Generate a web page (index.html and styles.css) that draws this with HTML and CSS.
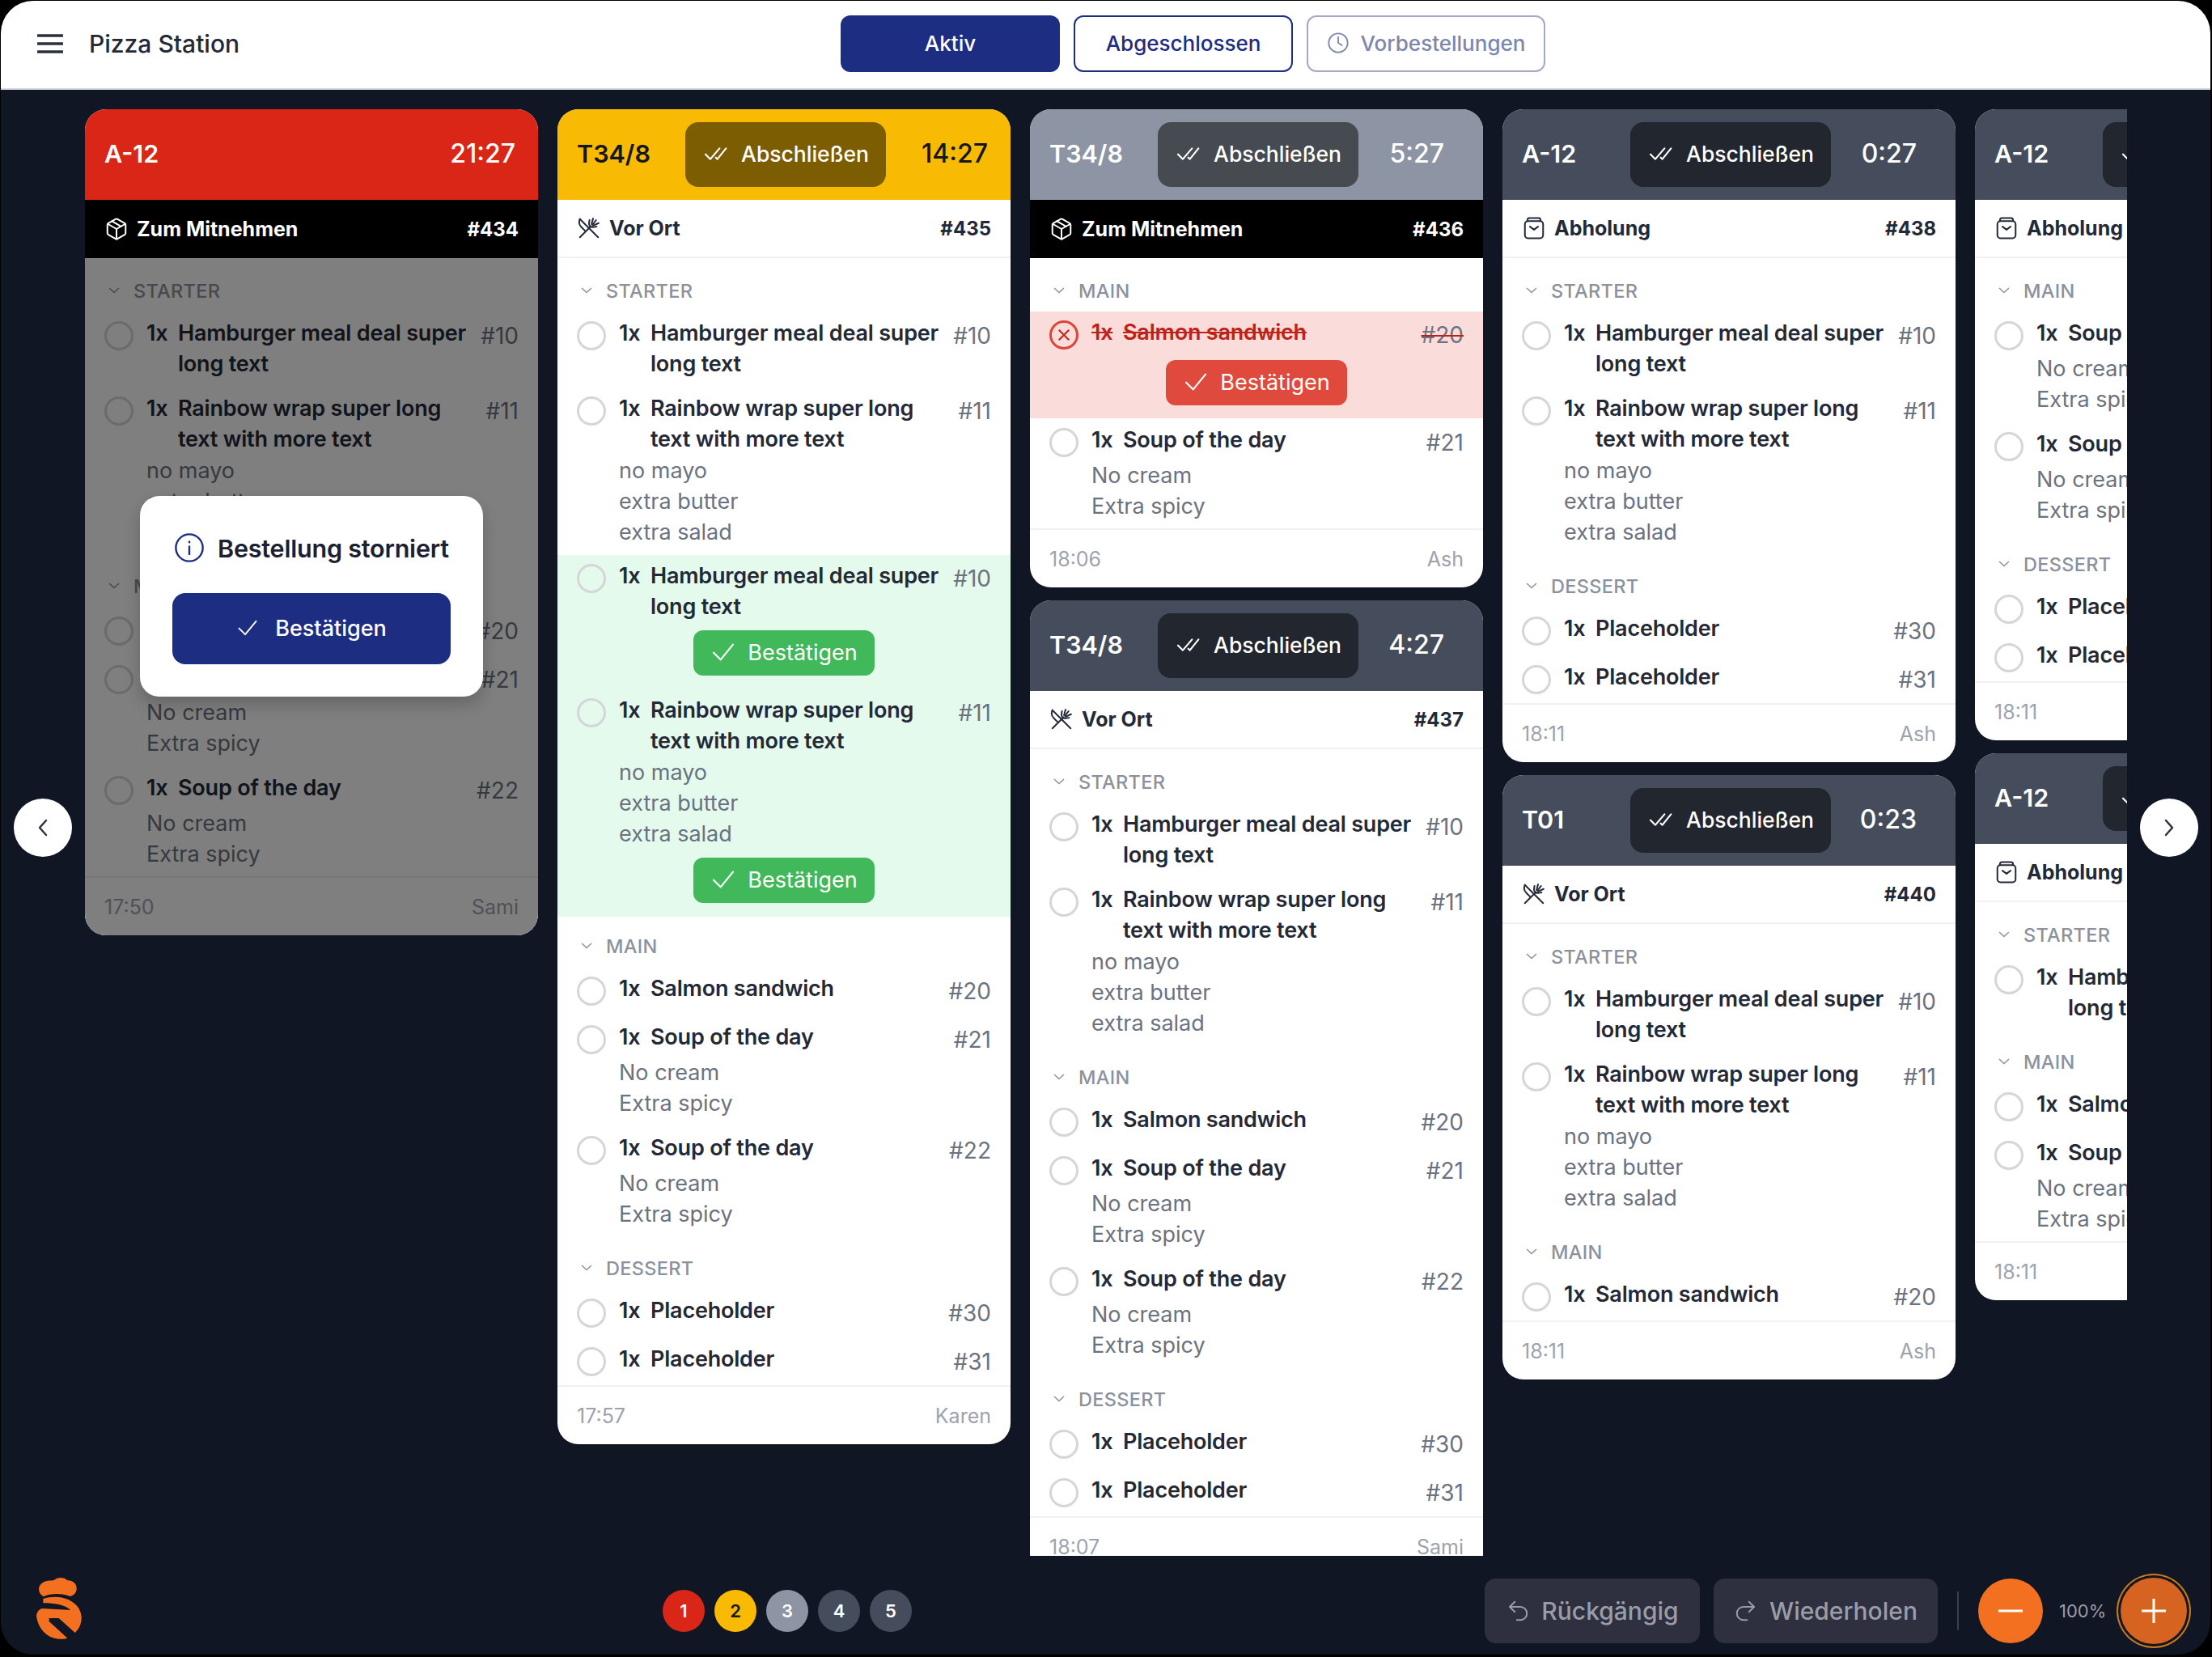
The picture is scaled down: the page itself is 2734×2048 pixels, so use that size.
FILE: index.html
```html
<!DOCTYPE html>
<html lang="de">
<head>
<meta charset="utf-8">
<title>Pizza Station</title>
<link rel="stylesheet" href="styles.css">
</head>
<body>
<svg class="sprite" aria-hidden="true">
  <symbol id="i-checks" viewBox="0 0 24 24"><path d="M16 7 7.5 17 3 12.5"/><path d="m22 7-8 10-1.5-1.5"/></symbol>
  <symbol id="i-check" viewBox="0 0 24 24"><path d="M21 5 9.5 19 3 12.5"/></symbol>
  <symbol id="i-box" viewBox="0 0 24 24"><path d="M21 8a2 2 0 0 0-1-1.73l-7-4a2 2 0 0 0-2 0l-7 4A2 2 0 0 0 3 8v8a2 2 0 0 0 1 1.73l7 4a2 2 0 0 0 2 0l7-4A2 2 0 0 0 21 16Z"/><path d="m3.3 7 8.7 5 8.7-5"/><path d="M12 22V12"/><path d="m7.5 4.27 9 5.15"/></symbol>
  <symbol id="i-utensils" viewBox="0 0 24 24"><path d="M3 3 21 21"/><path d="M3 3c-1.400 3 -.5 6 1.500 8l3.500 3.500"/><path d="M3 21 14 10"/><path d="m12.500 4-.5 3c-.2 1.500 .3 2.300 1 3 .7.700 1.500 1.200 3 1l3.500-.5"/><path d="M16 2.500 14.500 8"/><path d="m19 4-3.500 4.500"/><path d="M21.500 7 16 9.500"/></symbol>
  <symbol id="i-bag" viewBox="0 0 24 24"><rect x="3" y="5" width="18" height="17" rx="3"/><path d="M5.500 5V4a2 2 0 0 1 2-2h9a2 2 0 0 1 2 2v1"/><path d="m8 10.500 4 3 4-3"/></symbol>
  <symbol id="i-clock" viewBox="0 0 24 24"><circle cx="12" cy="12" r="10"/><path d="M12 6v6l4 2.500"/></symbol>
  <symbol id="i-info" viewBox="0 0 24 24"><circle cx="12" cy="12" r="10.500"/><path d="M12 11v6"/><path d="M12 7.200v.6"/></symbol>
  <symbol id="i-chev" viewBox="0 0 14 8"><path d="m1 1 6 5.500L13 1"/></symbol>
  <symbol id="i-undo" viewBox="0 0 24 24"><path d="M9 13 4 8l5-5"/><path d="M4 8h10.500a5.500 5.500 0 0 1 0 13H11"/></symbol>
  <symbol id="i-redo" viewBox="0 0 24 24"><path d="m15 13 5-5-5-5"/><path d="M20 8H9.500a5.500 5.500 0 0 0 0 13H13"/></symbol>
</svg>

<div class="app">
  <header class="topbar">
    <div class="brand">
      <svg class="burger" viewBox="0 0 32 26"><path d="M1 3h30M1 13h30M1 23h30"/></svg>
      <span class="brand-name">Pizza Station</span>
    </div>
    <nav class="tabs">
      <button class="tab tab-active">Aktiv</button>
      <button class="tab tab-outline">Abgeschlossen</button>
      <button class="tab tab-muted"><svg class="ico ico-tab"><use href="#i-clock"/></svg>Vorbestellungen</button>
    </nav>
  </header>

  <main class="board">
    <!-- column 1 -->
    <div class="col">
      <article class="card card-cancelled">
        <div class="card-head head-red">
          <span class="title">A-12</span><span class="time">21:27</span>
        </div>
        <div class="band band-black"><svg class="ico ico-band"><use href="#i-box"/></svg><span class="band-name">Zum Mitnehmen</span><span class="band-no">#434</span></div>
        <div class="dim-area">
          <div class="body">
            <section class="section">
              <div class="cat"><svg class="chev"><use href="#i-chev"/></svg>Starter</div>
              <div class="items">
                <div class="item"><span class="radio"></span><div class="main"><div class="line"><span class="qty">1x</span><span class="name">Hamburger meal deal super<br>long text</span><span class="ref">#10</span></div></div></div>
                <div class="item"><span class="radio"></span><div class="main"><div class="line"><span class="qty">1x</span><span class="name">Rainbow wrap super long<br>text with more text</span><span class="ref">#11</span></div><div class="notes">no mayo<br>extra butter<br>extra salad</div></div></div>
              </div>
            </section>
            <section class="section">
              <div class="cat"><svg class="chev"><use href="#i-chev"/></svg>Main</div>
              <div class="items">
                <div class="item"><span class="radio"></span><div class="main"><div class="line"><span class="qty">1x</span><span class="name">Salmon sandwich</span><span class="ref">#20</span></div></div></div>
                <div class="item"><span class="radio"></span><div class="main"><div class="line"><span class="qty">1x</span><span class="name">Soup of the day</span><span class="ref">#21</span></div><div class="notes">No cream<br>Extra spicy</div></div></div>
                <div class="item"><span class="radio"></span><div class="main"><div class="line"><span class="qty">1x</span><span class="name">Soup of the day</span><span class="ref">#22</span></div><div class="notes">No cream<br>Extra spicy</div></div></div>
              </div>
            </section>
          </div>
          <div class="foot"><span>17:50</span><span>Sami</span></div>
        </div>
        <div class="modal">
          <div class="modal-title"><svg class="ico ico-info"><use href="#i-info"/></svg>Bestellung storniert</div>
          <button class="modal-btn"><svg class="ico ico-modal"><use href="#i-check"/></svg>Bestätigen</button>
        </div>
      </article>
    </div>

    <!-- column 2 -->
    <div class="col">
      <article class="card">
        <div class="card-head head-yellow">
          <span class="title">T34/8</span>
          <button class="finish"><svg class="ico ico-finish"><use href="#i-checks"/></svg>Abschließen</button>
          <span class="time">14:27</span>
        </div>
        <div class="band"><svg class="ico ico-band"><use href="#i-utensils"/></svg><span class="band-name">Vor Ort</span><span class="band-no">#435</span></div>
        <div class="body">
          <section class="section">
            <div class="cat"><svg class="chev"><use href="#i-chev"/></svg>Starter</div>
            <div class="items">
              <div class="item"><span class="radio"></span><div class="main"><div class="line"><span class="qty">1x</span><span class="name">Hamburger meal deal super<br>long text</span><span class="ref">#10</span></div></div></div>
              <div class="item"><span class="radio"></span><div class="main"><div class="line"><span class="qty">1x</span><span class="name">Rainbow wrap super long<br>text with more text</span><span class="ref">#11</span></div><div class="notes">no mayo<br>extra butter<br>extra salad</div></div></div>
              <div class="hl hl-green">
                <div class="hl-entry">
                  <div class="item"><span class="radio"></span><div class="main"><div class="line"><span class="qty">1x</span><span class="name">Hamburger meal deal super<br>long text</span><span class="ref">#10</span></div></div></div>
                  <button class="confirm confirm-green"><svg class="ico ico-confirm"><use href="#i-check"/></svg>Bestätigen</button>
                </div>
                <div class="hl-entry">
                  <div class="item"><span class="radio"></span><div class="main"><div class="line"><span class="qty">1x</span><span class="name">Rainbow wrap super long<br>text with more text</span><span class="ref">#11</span></div><div class="notes">no mayo<br>extra butter<br>extra salad</div></div></div>
                  <button class="confirm confirm-green"><svg class="ico ico-confirm"><use href="#i-check"/></svg>Bestätigen</button>
                </div>
              </div>
            </div>
          </section>
          <section class="section">
            <div class="cat"><svg class="chev"><use href="#i-chev"/></svg>Main</div>
            <div class="items">
              <div class="item"><span class="radio"></span><div class="main"><div class="line"><span class="qty">1x</span><span class="name">Salmon sandwich</span><span class="ref">#20</span></div></div></div>
              <div class="item"><span class="radio"></span><div class="main"><div class="line"><span class="qty">1x</span><span class="name">Soup of the day</span><span class="ref">#21</span></div><div class="notes">No cream<br>Extra spicy</div></div></div>
              <div class="item"><span class="radio"></span><div class="main"><div class="line"><span class="qty">1x</span><span class="name">Soup of the day</span><span class="ref">#22</span></div><div class="notes">No cream<br>Extra spicy</div></div></div>
            </div>
          </section>
          <section class="section">
            <div class="cat"><svg class="chev"><use href="#i-chev"/></svg>Dessert</div>
            <div class="items">
              <div class="item"><span class="radio"></span><div class="main"><div class="line"><span class="qty">1x</span><span class="name">Placeholder</span><span class="ref">#30</span></div></div></div>
              <div class="item"><span class="radio"></span><div class="main"><div class="line"><span class="qty">1x</span><span class="name">Placeholder</span><span class="ref">#31</span></div></div></div>
            </div>
          </section>
        </div>
        <div class="foot"><span>17:57</span><span>Karen</span></div>
      </article>
    </div>

    <!-- column 3 -->
    <div class="col">
      <article class="card">
        <div class="card-head head-gray">
          <span class="title">T34/8</span>
          <button class="finish"><svg class="ico ico-finish"><use href="#i-checks"/></svg>Abschließen</button>
          <span class="time time-short">5:27</span>
        </div>
        <div class="band band-black"><svg class="ico ico-band"><use href="#i-box"/></svg><span class="band-name">Zum Mitnehmen</span><span class="band-no">#436</span></div>
        <div class="body">
          <section class="section">
            <div class="cat"><svg class="chev"><use href="#i-chev"/></svg>Main</div>
            <div class="items">
              <div class="hl hl-red">
                <div class="hl-entry">
                  <div class="item item-void"><span class="radio radio-void"><svg viewBox="0 0 24 24"><path d="m7 7 10 10M17 7 7 17"/></svg></span><div class="main"><div class="line"><span class="qty">1x</span><span class="name">Salmon sandwich</span><span class="ref">#20</span></div></div></div>
                  <button class="confirm confirm-red"><svg class="ico ico-confirm"><use href="#i-check"/></svg>Bestätigen</button>
                </div>
              </div>
              <div class="item"><span class="radio"></span><div class="main"><div class="line"><span class="qty">1x</span><span class="name">Soup of the day</span><span class="ref">#21</span></div><div class="notes">No cream<br>Extra spicy</div></div></div>
            </div>
          </section>
        </div>
        <div class="foot"><span>18:06</span><span>Ash</span></div>
      </article>
      <article class="card">
        <div class="card-head head-dark">
          <span class="title">T34/8</span>
          <button class="finish"><svg class="ico ico-finish"><use href="#i-checks"/></svg>Abschließen</button>
          <span class="time time-short">4:27</span>
        </div>
        <div class="band"><svg class="ico ico-band"><use href="#i-utensils"/></svg><span class="band-name">Vor Ort</span><span class="band-no">#437</span></div>
        <div class="body">
          <section class="section">
            <div class="cat"><svg class="chev"><use href="#i-chev"/></svg>Starter</div>
            <div class="items">
              <div class="item"><span class="radio"></span><div class="main"><div class="line"><span class="qty">1x</span><span class="name">Hamburger meal deal super<br>long text</span><span class="ref">#10</span></div></div></div>
              <div class="item"><span class="radio"></span><div class="main"><div class="line"><span class="qty">1x</span><span class="name">Rainbow wrap super long<br>text with more text</span><span class="ref">#11</span></div><div class="notes">no mayo<br>extra butter<br>extra salad</div></div></div>
            </div>
          </section>
          <section class="section">
            <div class="cat"><svg class="chev"><use href="#i-chev"/></svg>Main</div>
            <div class="items">
              <div class="item"><span class="radio"></span><div class="main"><div class="line"><span class="qty">1x</span><span class="name">Salmon sandwich</span><span class="ref">#20</span></div></div></div>
              <div class="item"><span class="radio"></span><div class="main"><div class="line"><span class="qty">1x</span><span class="name">Soup of the day</span><span class="ref">#21</span></div><div class="notes">No cream<br>Extra spicy</div></div></div>
              <div class="item"><span class="radio"></span><div class="main"><div class="line"><span class="qty">1x</span><span class="name">Soup of the day</span><span class="ref">#22</span></div><div class="notes">No cream<br>Extra spicy</div></div></div>
            </div>
          </section>
          <section class="section">
            <div class="cat"><svg class="chev"><use href="#i-chev"/></svg>Dessert</div>
            <div class="items">
              <div class="item"><span class="radio"></span><div class="main"><div class="line"><span class="qty">1x</span><span class="name">Placeholder</span><span class="ref">#30</span></div></div></div>
              <div class="item"><span class="radio"></span><div class="main"><div class="line"><span class="qty">1x</span><span class="name">Placeholder</span><span class="ref">#31</span></div></div></div>
            </div>
          </section>
        </div>
        <div class="foot"><span>18:07</span><span>Sami</span></div>
      </article>
    </div>

    <!-- column 4 -->
    <div class="col">
      <article class="card">
        <div class="card-head head-dark">
          <span class="title">A-12</span>
          <button class="finish"><svg class="ico ico-finish"><use href="#i-checks"/></svg>Abschließen</button>
          <span class="time time-short">0:27</span>
        </div>
        <div class="band"><svg class="ico ico-band"><use href="#i-bag"/></svg><span class="band-name">Abholung</span><span class="band-no">#438</span></div>
        <div class="body">
          <section class="section">
            <div class="cat"><svg class="chev"><use href="#i-chev"/></svg>Starter</div>
            <div class="items">
              <div class="item"><span class="radio"></span><div class="main"><div class="line"><span class="qty">1x</span><span class="name">Hamburger meal deal super<br>long text</span><span class="ref">#10</span></div></div></div>
              <div class="item"><span class="radio"></span><div class="main"><div class="line"><span class="qty">1x</span><span class="name">Rainbow wrap super long<br>text with more text</span><span class="ref">#11</span></div><div class="notes">no mayo<br>extra butter<br>extra salad</div></div></div>
            </div>
          </section>
          <section class="section">
            <div class="cat"><svg class="chev"><use href="#i-chev"/></svg>Dessert</div>
            <div class="items">
              <div class="item"><span class="radio"></span><div class="main"><div class="line"><span class="qty">1x</span><span class="name">Placeholder</span><span class="ref">#30</span></div></div></div>
              <div class="item"><span class="radio"></span><div class="main"><div class="line"><span class="qty">1x</span><span class="name">Placeholder</span><span class="ref">#31</span></div></div></div>
            </div>
          </section>
        </div>
        <div class="foot"><span>18:11</span><span>Ash</span></div>
      </article>
      <article class="card">
        <div class="card-head head-dark">
          <span class="title">T01</span>
          <button class="finish"><svg class="ico ico-finish"><use href="#i-checks"/></svg>Abschließen</button>
          <span class="time time-short">0:23</span>
        </div>
        <div class="band"><svg class="ico ico-band"><use href="#i-utensils"/></svg><span class="band-name">Vor Ort</span><span class="band-no">#440</span></div>
        <div class="body">
          <section class="section">
            <div class="cat"><svg class="chev"><use href="#i-chev"/></svg>Starter</div>
            <div class="items">
              <div class="item"><span class="radio"></span><div class="main"><div class="line"><span class="qty">1x</span><span class="name">Hamburger meal deal super<br>long text</span><span class="ref">#10</span></div></div></div>
              <div class="item"><span class="radio"></span><div class="main"><div class="line"><span class="qty">1x</span><span class="name">Rainbow wrap super long<br>text with more text</span><span class="ref">#11</span></div><div class="notes">no mayo<br>extra butter<br>extra salad</div></div></div>
            </div>
          </section>
          <section class="section">
            <div class="cat"><svg class="chev"><use href="#i-chev"/></svg>Main</div>
            <div class="items">
              <div class="item"><span class="radio"></span><div class="main"><div class="line"><span class="qty">1x</span><span class="name">Salmon sandwich</span><span class="ref">#20</span></div></div></div>
            </div>
          </section>
        </div>
        <div class="foot"><span>18:11</span><span>Ash</span></div>
      </article>
    </div>

    <!-- column 5, cut off by the board edge -->
    <div class="col">
      <article class="card">
        <div class="card-head head-dark">
          <span class="title">A-12</span>
          <button class="finish"><svg class="ico ico-finish"><use href="#i-checks"/></svg>Abschließen</button>
          <span class="time time-short">0:27</span>
        </div>
        <div class="band"><svg class="ico ico-band"><use href="#i-bag"/></svg><span class="band-name">Abholung</span><span class="band-no">#439</span></div>
        <div class="body">
          <section class="section">
            <div class="cat"><svg class="chev"><use href="#i-chev"/></svg>Main</div>
            <div class="items">
              <div class="item"><span class="radio"></span><div class="main"><div class="line"><span class="qty">1x</span><span class="name">Soup of the day</span><span class="ref">#21</span></div><div class="notes">No cream<br>Extra spicy</div></div></div>
              <div class="item"><span class="radio"></span><div class="main"><div class="line"><span class="qty">1x</span><span class="name">Soup of the day</span><span class="ref">#22</span></div><div class="notes">No cream<br>Extra spicy</div></div></div>
            </div>
          </section>
          <section class="section">
            <div class="cat"><svg class="chev"><use href="#i-chev"/></svg>Dessert</div>
            <div class="items">
              <div class="item"><span class="radio"></span><div class="main"><div class="line"><span class="qty">1x</span><span class="name">Placeholder</span><span class="ref">#30</span></div></div></div>
              <div class="item"><span class="radio"></span><div class="main"><div class="line"><span class="qty">1x</span><span class="name">Placeholder</span><span class="ref">#31</span></div></div></div>
            </div>
          </section>
        </div>
        <div class="foot"><span>18:11</span><span>Ash</span></div>
      </article>
      <article class="card">
        <div class="card-head head-dark">
          <span class="title">A-12</span>
          <button class="finish"><svg class="ico ico-finish"><use href="#i-checks"/></svg>Abschließen</button>
          <span class="time time-short">0:20</span>
        </div>
        <div class="band"><svg class="ico ico-band"><use href="#i-bag"/></svg><span class="band-name">Abholung</span><span class="band-no">#441</span></div>
        <div class="body">
          <section class="section">
            <div class="cat"><svg class="chev"><use href="#i-chev"/></svg>Starter</div>
            <div class="items">
              <div class="item"><span class="radio"></span><div class="main"><div class="line"><span class="qty">1x</span><span class="name">Hamburger meal deal super<br>long text</span><span class="ref">#10</span></div></div></div>
            </div>
          </section>
          <section class="section">
            <div class="cat"><svg class="chev"><use href="#i-chev"/></svg>Main</div>
            <div class="items">
              <div class="item"><span class="radio"></span><div class="main"><div class="line"><span class="qty">1x</span><span class="name">Salmon sandwich</span><span class="ref">#20</span></div></div></div>
              <div class="item"><span class="radio"></span><div class="main"><div class="line"><span class="qty">1x</span><span class="name">Soup of the day</span><span class="ref">#21</span></div><div class="notes">No cream<br>Extra spicy</div></div></div>
            </div>
          </section>
        </div>
        <div class="foot"><span>18:11</span><span>Ash</span></div>
      </article>
    </div>
  </main>

  <button class="nav-btn nav-prev"><svg viewBox="0 0 16 24"><path d="M12 3 4 12l8 9"/></svg></button>
  <button class="nav-btn nav-next"><svg viewBox="0 0 16 24"><path d="m4 3 8 9-8 9"/></svg></button>

  <footer class="bottombar">
    <svg class="logo" viewBox="0 0 270 285">
      <path d="M72 100C52 90 48 64 64 52c12-14 34-10 48-14 12-12 38-10 48 2 26 0 40 20 32 42-5 10-12 15-22 17-30-12-70-12-98 1Z"/>
      <path d="M70 108C120 92 175 105 200 140 222 175 212 212 188 234L128 180H92V192L160 254C110 268 55 240 45 172 47 156 55 147 66 144L172 150C150 130 110 124 70 124Z"/>
    </svg>
    <div class="dots">
      <span class="dot dot-red">1</span>
      <span class="dot dot-yellow">2</span>
      <span class="dot dot-gray">3</span>
      <span class="dot dot-dark">4</span>
      <span class="dot dot-dark">5</span>
    </div>
    <div class="actions">
      <button class="hist hist-undo"><svg class="ico ico-hist"><use href="#i-undo"/></svg>Rückgängig</button>
      <button class="hist hist-redo"><svg class="ico ico-hist"><use href="#i-redo"/></svg>Wiederholen</button>
      <span class="divider"></span>
      <button class="zoom zoom-out"><svg viewBox="0 0 32 32"><path d="M1 16h30"/></svg></button>
      <span class="pct">100%</span>
      <button class="zoom zoom-in"><svg viewBox="0 0 32 32"><path d="M1 16h30M16 1v30"/></svg></button>
    </div>
  </footer>
</div>
</body>
</html>
```

FILE: styles.css
```css
* { box-sizing: border-box; }

html, body {
  margin: 0;
  padding: 0;
  background: #000;
}

body {
  width: 2734px;
  height: 2048px;
  overflow: hidden;
  padding: 1px 2px 3px 1px;
  font-family: "Inter", "Noto Sans", "Liberation Sans", sans-serif;
  color: #232936;
}

button {
  font: inherit;
  border: 0;
  padding: 0;
  cursor: pointer;
}

.sprite { display: none; }

.ico {
  display: block;
  flex: none;
  fill: none;
  stroke: currentColor;
  stroke-width: 1.6;
  stroke-linecap: round;
  stroke-linejoin: round;
}

.app {
  position: relative;
  width: 2731px;
  height: 2044px;
  background: #111624;
  border-radius: 40px;
  overflow: hidden;
  display: flex;
  flex-direction: column;
}

/* top bar */
.topbar {
  flex: none;
  height: 110px;
  background: #fff;
  border-bottom: 2px solid #d5d8de;
  display: flex;
  align-items: center;
  padding: 0 0 2px 45px;
}

.brand {
  width: 993px;
  flex: none;
  display: flex;
  align-items: center;
  gap: 32px;
}

.burger {
  width: 32px;
  height: 26px;
  fill: none;
  stroke: #2a3040;
  stroke-width: 3.500;
  stroke-linecap: round;
}

.brand-name {
  font-size: 30px;
  font-weight: 500;
  color: #232936;
}

.tabs {
  display: flex;
  gap: 17px;
}

.tab {
  height: 70px;
  border-radius: 12px;
  font-size: 26px;
  font-weight: 500;
  padding-bottom: 2px;
  display: flex;
  align-items: center;
  justify-content: center;
  gap: 14px;
}

.tab-active { width: 271px; background: #1c2d82; color: #fff; }
.tab-outline { width: 271px; background: #fff; color: #1c2d82; border: 2px solid #1c2d82; }
.tab-muted { width: 295px; background: #fff; color: #7d86ab; border: 2px solid #a4aac6; }
.ico-tab { width: 28px; height: 28px; }

/* board */
.board {
  flex: none;
  height: 1812px;
  margin-left: 104px;
  width: 2524px;
  padding-top: 24px;
  display: flex;
  gap: 24px;
  overflow: hidden;
}

.col {
  flex: none;
  width: 560px;
  display: flex;
  flex-direction: column;
  gap: 16px;
}

.card {
  flex: none;
  position: relative;
  background: #fff;
  border-radius: 26px;
  overflow: hidden;
}

.card-cancelled { overflow: visible; }
.card-cancelled .card-head { border-radius: 26px 26px 0 0; }

.card-head {
  height: 112px;
  display: flex;
  align-items: center;
  padding: 0 20px 0 30px;
  color: #fff;
  font-size: 30.500px;
  font-weight: 600;
}

.head-red { background: #d92616; }
.head-yellow { background: #f9ba03; color: #14161d; }
.head-gray { background: #8d94a3; }
.head-dark { background: #454d5c; }

.title { flex: 1 1 100px; margin: -3px 0 0 -6px; }
.time { flex: 1 1 100px; margin-top: -3px; font-size: 32px; font-weight: 500; text-align: right; padding-right: 8px; }
.time-short { padding-right: 28px; }

.finish {
  flex: none;
  width: 248px;
  height: 80px;
  border-radius: 16px;
  background: rgba(0, 0, 0, .5);
  color: #fff;
  font-size: 26.500px;
  font-weight: 500;
  padding-bottom: 2px;
  display: flex;
  align-items: center;
  justify-content: center;
  gap: 16px;
}

.ico-finish { width: 32px; height: 32px; }

.band {
  height: 72px;
  display: flex;
  align-items: center;
  padding: 0 24px;
  background: #fff;
  color: #232936;
  border-bottom: 2px solid #f0f1f3;
  font-size: 24px;
  font-weight: 700;
}

.band-black { background: #000; color: #fff; border-bottom: 0; }
.ico-band { width: 30px; height: 30px; margin-right: 10px; }
.band-name { flex: 1; font-size: 25px; }

.body {
  padding: 23px 24px 8px;
  display: flex;
  flex-direction: column;
  gap: 30px;
}

.cat {
  height: 34px;
  margin-bottom: 17px;
  display: flex;
  align-items: center;
  gap: 17px;
  padding-left: 5px;
  color: #8c929c;
  font-size: 23.500px;
  font-weight: 500;
  text-transform: uppercase;
  letter-spacing: .3px;
}

.chev {
  width: 14px;
  height: 8px;
  fill: none;
  stroke: currentColor;
  stroke-width: 1.500;
}

.items {
  display: flex;
  flex-direction: column;
  gap: 17px;
}

.item {
  display: flex;
  align-items: flex-start;
  gap: 16px;
}

.radio {
  flex: none;
  width: 36px;
  height: 36px;
  margin-top: 4px;
  border-radius: 50%;
  border: 3px solid #d4d6d9;
}

.radio-void {
  border-color: #d9473a;
  display: flex;
  color: #c02a20;
}

.radio-void svg {
  width: 100%;
  height: 100%;
  fill: none;
  stroke: currentColor;
  stroke-width: 1.800;
}

.main { flex: 1; min-width: 0; }

.line {
  display: flex;
  align-items: flex-start;
  min-height: 43px;
  font-size: 27px;
  line-height: 38px;
  font-weight: 600;
  letter-spacing: -.2px;
}

.qty { flex: none; width: 39px; }
.name { flex: 1; }

.ref {
  flex: none;
  margin-top: 3px;
  color: #6b7280;
  font-size: 28px;
  font-weight: 400;
  letter-spacing: 0;
}

.notes {
  margin-top: 1px;
  font-size: 27px;
  line-height: 38px;
  font-weight: 400;
  color: #6b7280;
}

/* highlighted groups */
.hl {
  margin: 0 -24px;
  padding: 7px 24px 17px;
  display: flex;
  flex-direction: column;
  gap: 24px;
}

.hl-green {
  background: #e4faec;
  margin-top: -8px;
  margin-bottom: -11px;
}

.hl-red {
  background: #fadcda;
  margin-top: -8px;
  margin-bottom: -9px;
  padding-bottom: 16px;
}

.hl-entry {
  display: flex;
  flex-direction: column;
  gap: 10px;
}

.item-void .qty,
.item-void .name { color: #bd2318; text-decoration: line-through; }
.item-void .ref { text-decoration: line-through; text-decoration-color: #bd2318; }

.confirm {
  width: 224px;
  height: 56px;
  margin: 0 auto;
  border-radius: 12px;
  color: #fff;
  font-size: 27px;
  font-weight: 400;
  padding-bottom: 2px;
  display: flex;
  align-items: center;
  justify-content: center;
  gap: 14px;
}

.confirm-green { background: #41b85a; }
.confirm-red { background: #e04a3c; }
.ico-confirm { width: 32px; height: 32px; }

.foot {
  height: 73px;
  margin: 0;
  padding: 0 24px;
  border-top: 2px solid #f0f1f3;
  display: flex;
  align-items: center;
  justify-content: space-between;
  color: #9ca3af;
  font-size: 25px;
}

.dim-area {
  position: relative;
  border-radius: 0 0 26px 26px;
  overflow: hidden;
  background: #fff;
}

.dim-area::after {
  content: "";
  position: absolute;
  inset: 0;
  background: rgba(0, 0, 0, .5);
}

.modal {
  position: absolute;
  left: 68px;
  top: 478px;
  width: 424px;
  height: 248px;
  background: #fff;
  border-radius: 24px;
  padding: 42px 40px 40px;
  box-shadow: 0 10px 20px rgba(0, 0, 0, .2);
}

.modal-title {
  height: 44px;
  display: flex;
  align-items: center;
  gap: 16px;
  margin-bottom: 34px;
  padding-left: 2px;
  font-size: 30.500px;
  font-weight: 600;
  letter-spacing: -.2px;
  color: #1b2130;
  white-space: nowrap;
}

.ico-info { width: 38px; height: 38px; color: #1c2d82; stroke-width: 1.500; }

.modal-btn {
  width: 344px;
  height: 88px;
  border-radius: 16px;
  background: #1c2d82;
  color: #fff;
  font-size: 27px;
  font-weight: 500;
  padding-bottom: 2px;
  display: flex;
  align-items: center;
  justify-content: center;
  gap: 20px;
}

.ico-modal { width: 28px; height: 28px; }

/* side arrows */
.nav-btn {
  position: absolute;
  top: 986px;
  width: 72px;
  height: 72px;
  border-radius: 50%;
  background: #fff;
  display: flex;
  align-items: center;
  justify-content: center;
}

.nav-btn svg {
  width: 16px;
  height: 24px;
  fill: none;
  stroke: #2a3040;
  stroke-width: 2.400;
  stroke-linecap: round;
  stroke-linejoin: round;
}

.nav-prev { left: 16px; }
.nav-next { left: 2644px; }

/* bottom bar */
.bottombar {
  flex: 1;
  display: flex;
  align-items: center;
  padding: 14px 29px 0 29px;
}

.logo {
  flex: none;
  width: 90px;
  height: 95px;
  margin-top: -8px;
  fill: #f37021;
}

.dots {
  margin-left: 699px;
  display: flex;
  gap: 12px;
}

.dot {
  width: 52px;
  height: 52px;
  border-radius: 50%;
  display: flex;
  align-items: center;
  justify-content: center;
  color: #fff;
  font-size: 22px;
  font-weight: 600;
}

.dot-red { background: #d92616; }
.dot-yellow { background: #f9ba03; color: #14161d; }
.dot-gray { background: #8d94a3; }
.dot-dark { background: #454d5c; }

.actions {
  margin-left: auto;
  display: flex;
  align-items: center;
}

.hist {
  height: 80px;
  border-radius: 14px;
  background: #2e3040;
  color: #9a9ca8;
  font-size: 30px;
  font-weight: 500;
  display: flex;
  align-items: center;
  justify-content: center;
  gap: 14px;
}

.hist-undo { width: 266px; margin-right: 17px; }
.hist-redo { width: 277px; }
.ico-hist { width: 30px; height: 30px; }

.divider {
  width: 2px;
  height: 48px;
  margin: 0 24px;
  background: #3a3e4d;
}

.zoom {
  border-radius: 50%;
  display: flex;
  align-items: center;
  justify-content: center;
}

.zoom svg {
  width: 32px;
  height: 32px;
  fill: none;
  stroke: #fff;
  stroke-width: 3;
}

.zoom-out { width: 80px; height: 80px; background: #f37021; }

.zoom-in {
  width: 82px;
  height: 82px;
  background: #d66420;
  box-shadow: 0 0 0 3px #111624, 0 0 0 5px #c77a1e;
  margin-left: 18px;
}

.pct {
  margin-left: 20px;
  width: 58px;
  color: #9a9ca8;
  font-size: 22px;
  font-weight: 400;
  white-space: nowrap;
}
```
